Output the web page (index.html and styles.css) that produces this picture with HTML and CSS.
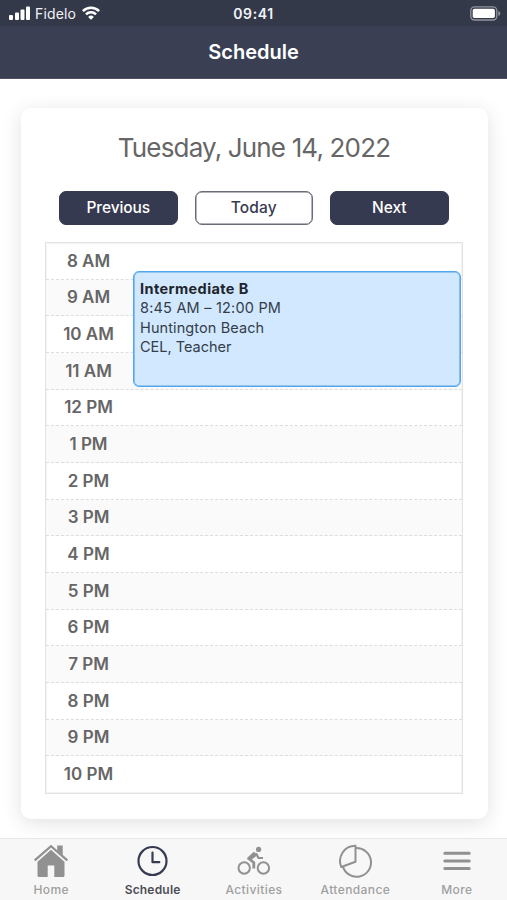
FILE: index.html
```html
<!DOCTYPE html>
<html lang="en">
<head>
<meta charset="utf-8">
<title>Schedule</title>
<link rel="stylesheet" href="styles.css">
</head>
<body>
<div class="status">
  <div class="carrier">
    <svg class="signal" width="22" height="14" viewBox="0 0 22 14" fill="#fff"><rect x="0" y="9" width="4" height="5" rx="1"/><rect x="6" y="6.500" width="4" height="7.500" rx="1"/><rect x="11.500" y="3.500" width="4" height="10.500" rx="1"/><rect x="17" y="0.500" width="4" height="13.500" rx="1"/></svg>
    <span class="carrier-name">Fidelo</span>
    <svg width="18" height="14" viewBox="0 0 18 14" fill="none" stroke="#fff" stroke-width="2.600"><path d="M.9 5.100a11.500 11.500 0 0 1 16.200 0M4 8.400a7 7 0 0 1 10 0"/><path d="M9 13.800 6.100 10.900a4.100 4.100 0 0 1 5.800 0z" fill="#fff" stroke="none"/></svg>
  </div>
  <time class="clock">09:41</time>
  <svg class="battery" width="31" height="15" viewBox="0 0 31 15"><rect x=".8" y=".8" width="26" height="13.200" rx="3.700" fill="none" stroke="#92959e" stroke-width="1.300"/><rect x="2.700" y="2.700" width="22.200" height="9.400" rx="1.800" fill="#fff"/><path d="M28.300 5v5q2-.7 2-2.500t-2-2.500" fill="#92959e"/></svg>
</div>
<header class="header"><h1>Schedule</h1></header>
<main class="content">
  <section class="card">
    <h2>Tuesday, June 14, 2022</h2>
    <div class="buttons">
      <button class="btn">Previous</button>
      <button class="btn outline">Today</button>
      <button class="btn">Next</button>
    </div>
    <div class="calendar">
      <div class="row"><span>8 AM</span></div>
      <div class="row"><span>9 AM</span></div>
      <div class="row"><span>10 AM</span></div>
      <div class="row"><span>11 AM</span></div>
      <div class="row"><span>12 PM</span></div>
      <div class="row"><span>1 PM</span></div>
      <div class="row"><span>2 PM</span></div>
      <div class="row"><span>3 PM</span></div>
      <div class="row"><span>4 PM</span></div>
      <div class="row"><span>5 PM</span></div>
      <div class="row"><span>6 PM</span></div>
      <div class="row"><span>7 PM</span></div>
      <div class="row"><span>8 PM</span></div>
      <div class="row"><span>9 PM</span></div>
      <div class="row"><span>10 PM</span></div>
      <article class="event">
        <strong>Intermediate B</strong>
        <p class="time">8:45 AM – 12:00 PM</p>
        <p class="place">Huntington Beach</p>
        <p class="teacher">CEL, Teacher</p>
      </article>
    </div>
  </section>
</main>
<nav class="tabs">
  <a class="tab home">
    <svg width="36" height="36" viewBox="0 0 36 36" fill="#919191"><path d="M1.700 17.300 18 3.200 34.300 17.300" fill="none" stroke="#919191" stroke-width="2.300"/><path d="M24.200 2.500h5.500v10l-5.500-5z"/><path d="M18 6.800 4.500 18.700v13.800q0 1.500 1.500 1.500h8.700V22.500h6.600V34H30q1.500 0 1.500-1.500V18.700z"/></svg>
    <span>Home</span>
  </a>
  <a class="tab schedule active">
    <svg width="36" height="36" viewBox="0 0 36 36" fill="none" stroke="#373b52" stroke-width="2.200"><circle cx="17.500" cy="18" r="14"/><path d="M17.500 9.500v9.700h6.800" stroke-linecap="round" stroke-linejoin="round"/></svg>
    <span>Schedule</span>
  </a>
  <a class="tab activities">
    <svg width="36" height="36" viewBox="0 0 36 36" fill="none" stroke="#919191" stroke-width="2"><circle cx="8.200" cy="25" r="5.700"/><circle cx="27.400" cy="25" r="5.700"/><circle cx="22.600" cy="6.400" r="2.600" fill="#919191" stroke="none"/><path d="m18.700 9.900-6.200 5.600 5.300 4v6" stroke-width="2.800" stroke-linejoin="round"/><path d="m20 10.300 2.500 4.700h4.500" stroke-width="2.200"/><path d="m14 15.500 6-4.700" stroke-width="4"/></svg>
    <span>Activities</span>
  </a>
  <a class="tab attendance">
    <svg width="36" height="36" viewBox="0 0 36 36" fill="none" stroke="#919191" stroke-width="2" stroke-linejoin="round"><path d="M18.500 2.800v16L4.300 24A15.200 15.200 0 0 1 18.500 2.800z"/><path d="M19 5a14.400 14.400 0 1 1-13.200 18.400"/></svg>
    <span>Attendance</span>
  </a>
  <a class="tab more">
    <svg width="36" height="36" viewBox="0 0 36 36" fill="none" stroke="#919191" stroke-width="3" stroke-linecap="round"><path d="M5.800 10.300h24.400M5.800 18h24.400M5.800 25.600h24.400"/></svg>
    <span>More</span>
  </a>
</nav>
</body>
</html>
```

FILE: styles.css
```css
* { box-sizing: border-box; }
body {
  margin: 0;
  width: 507px;
  height: 900px;
  overflow: hidden;
  display: flex;
  flex-direction: column;
  background: #fff;
  color: #666;
  font-family: Inter, "Liberation Sans", sans-serif;
}
h1, h2, p { margin: 0; }
.status {
  height: 26px;
  flex: none;
  display: grid;
  grid-template-columns: 1fr auto 1fr;
  align-items: center;
  padding: 0 6px 0 9px;
  background: #343949;
  color: #f2f3f7;
}
.carrier { display: flex; align-items: center; }
.carrier-name { font-size: 14px; line-height: 16px; margin: 2px 6px 0 4px; letter-spacing: .15px; width: 41px; }
.clock { font-size: 14px; line-height: 16px; font-weight: 600; letter-spacing: .6px; padding: 2px 3px 0 0; }
.battery { justify-self: end; }
.header {
  height: 53px;
  flex: none;
  display: flex;
  justify-content: center;
  background: #3a3f54;
  border-bottom: 1px solid #4d5160;
}
h1 { font-size: 20px; line-height: 24px; font-weight: 600; color: #fff; margin-top: 14px; }
.content { flex: 1; min-height: 0; padding: 29px 19.5px 0 20.5px; }
.card {
  height: 710.5px;
  padding: 24px 24px 0;
  border-radius: 10px;
  background: #fff;
  box-shadow: 0 4px 20px rgba(0, 0, 0, .12);
}
h2 { font-size: 26px; line-height: 32px; font-weight: 400; text-align: center; letter-spacing: -.84px; }
.buttons { display: flex; gap: 17px; margin: 27px 15px 0 14.5px; }
.btn {
  flex: 1;
  height: 34px;
  padding: 0;
  border: 1px solid #363a50;
  border-radius: 7px;
  background: #363a50;
  color: #fff;
  font: 500 15.5px/20px Inter, "Liberation Sans", sans-serif;
  letter-spacing: -.1px;
}
.outline { background: #fff; color: #363a50; border-color: #686b79; letter-spacing: .1px; box-shadow: inset 0 0 0 .5px #686b79; }
.calendar {
  position: relative;
  height: 552px;
  margin: 17px 1px 0 0;
  border: 1px solid #e2e2e2;
  box-shadow: inset 0 0 0 1px #f4f4f4;
  display: grid;
  grid-template-rows: repeat(15, 1fr);
}
.row { display: flex; align-items: center; border-bottom: 1px dashed #ddd; }
.row:nth-child(even) { background: #fafafa; }
.row:nth-child(15) { border-bottom: 0; }
.row span { width: 86px; text-align: center; font-size: 17px; line-height: 20px; font-weight: 600; }
.row:last-of-type span { padding-bottom: 1px; }
.event {
  position: absolute;
  top: 28px;
  left: 87px;
  right: 1px;
  height: 116px;
  padding: 6.5px 6.5px;
  border: 1px solid #53a6ee;
  box-shadow: inset 0 0 0 .6px #53a6ee;
  border-radius: 6px;
  background: #d1e8ff;
  color: #343d49;
  font-size: 14.5px;
  line-height: 19.6px;
}
.event strong { display: block; font-weight: 700; color: #20242a; letter-spacing: .4px; }
.time { letter-spacing: .2px; }
.place { letter-spacing: .1px; }
.tabs {
  height: 62px;
  flex: none;
  display: grid;
  grid-template-columns: repeat(5, 1fr);
  background: #f7f7f7;
  border-top: 1px solid #e7e7e7;
}
.tab { display: flex; flex-direction: column; align-items: center; padding: 4px 0 0 1px; color: #a0a0a0; font-size: 12px; line-height: 16px; font-weight: 500; letter-spacing: .4px; }
.tab svg { flex: none; }
.tab span { margin-top: 3px; }
.active { color: #4c4d55; font-weight: 600; letter-spacing: .2px; }
```
